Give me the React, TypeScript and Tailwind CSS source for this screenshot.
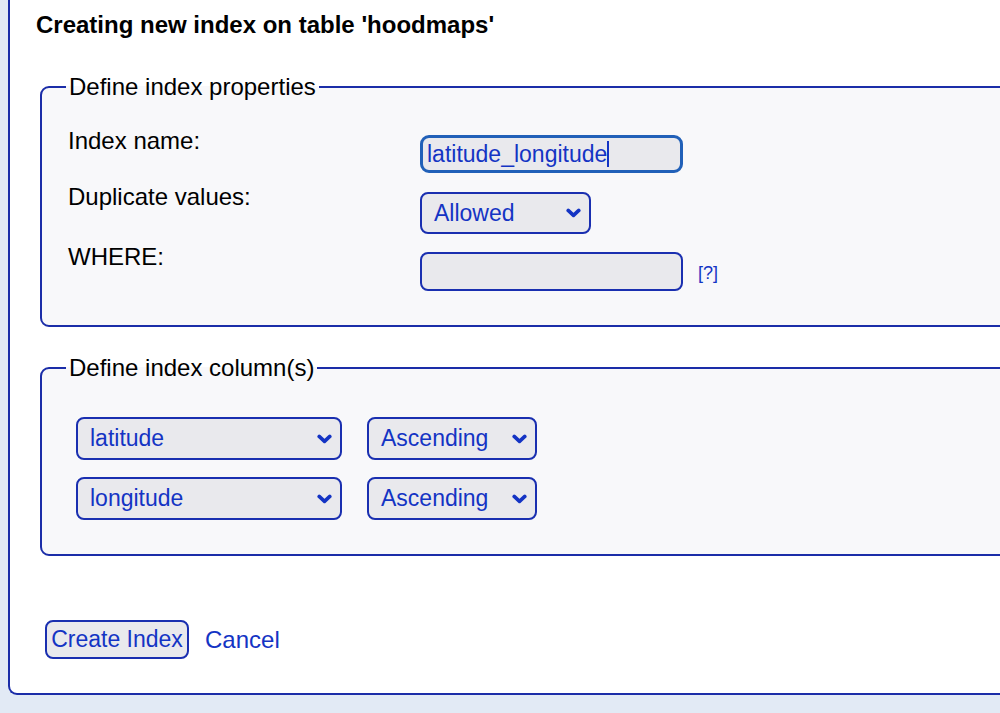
import React from 'react';

const font = { fontFamily: '"Liberation Sans", Arial, Helvetica, sans-serif' };

const Chevron = () => (
  <svg width="15" height="10" viewBox="0 0 15 10" className="shrink-0">
    <path d="M2.2 2.4 L7.5 7.4 L12.8 2.4" fill="none" stroke="#1434c4" strokeWidth="3.6" strokeLinecap="round" strokeLinejoin="round" />
  </svg>
);

const Select = ({ value, w, h }: { value: string; w: string; h: string }) => (
  <div className={`${w} ${h} flex items-center justify-between pl-[12px] pr-[8px] border-2 border-[#1a2fb0] rounded-[8px] bg-[#e9e9ed] text-[23px] text-[#1434c4]`}>
    <span>{value}</span>
    <Chevron />
  </div>
);

export default function App() {
  return (
    <div className="w-full h-[713px] overflow-hidden bg-[#e2eaf5]" style={font}>
      <div className="ml-2 w-[1100px] bg-white border-l-2 border-b-2 border-[#1b2da8] rounded-bl-[9px] pb-[34px]">
        <h1 className="pt-[11px] pl-[26px] text-[24px] leading-[28px] font-bold text-black">
          Creating new index on table 'hoodmaps'
        </h1>

        {/* properties */}
        <fieldset className="mt-[34px] ml-[30px] w-[1040px] border-2 border-[#1b2da8] rounded-[9px] bg-[#f8f8fa] pl-[24px] pt-[34px] pb-[34px]">
          <legend className="px-[3px] text-[24px] leading-[28px] text-black">Define index properties</legend>
          <div className="flex flex-col gap-[19px]">
            <div className="flex items-start">
              <div className="w-[352px] ml-[2px] -mt-[8px] text-[24px] leading-[28px] text-black">Index name:</div>
              <div className="w-[263px] h-[38px] flex items-center pl-[4px] border-[3px] border-[#2160b8] rounded-[9px] bg-[#e9e9ed] text-[23px] text-[#1434c4]">
                <span>latitude_longitude</span>
                <span className="w-[1.5px] h-[26px] bg-[#1434c4]" />
              </div>
            </div>
            <div className="flex items-start">
              <div className="w-[352px] ml-[2px] -mt-[9px] text-[24px] leading-[28px] text-black">Duplicate values:</div>
              <Select value="Allowed" w="w-[171px]" h="h-[42px]" />
            </div>
            <div className="flex items-start -mt-[1px]">
              <div className="w-[352px] ml-[2px] -mt-[9px] text-[24px] leading-[28px] text-black">WHERE:</div>
              <div className="w-[263px] h-[39px] border-2 border-[#1a2fb0] rounded-[8px] bg-[#e9e9ed]" />
              <a className="ml-[15px] mt-[10px] text-[18px] leading-[22px] text-[#1434c4]">[?]</a>
            </div>
          </div>
        </fieldset>

        {/* columns */}
        <fieldset className="mt-[27px] ml-[30px] w-[1040px] border-2 border-[#1b2da8] rounded-[9px] bg-[#f8f8fa] pl-[24px] pt-[35px] pb-[34px]">
          <legend className="px-[3px] text-[24px] leading-[28px] text-black">Define index column(s)</legend>
          <div className="ml-[10px] flex flex-col gap-[17px]">
            <div className="flex gap-[25px]">
              <Select value="latitude" w="w-[266px]" h="h-[43px]" />
              <Select value="Ascending" w="w-[170px]" h="h-[43px]" />
            </div>
            <div className="flex gap-[25px]">
              <Select value="longitude" w="w-[266px]" h="h-[43px]" />
              <Select value="Ascending" w="w-[170px]" h="h-[43px]" />
            </div>
          </div>
        </fieldset>

        <div className="mt-[64px] ml-[35px] flex items-center gap-[16px]">
          <button className="w-[144px] h-[39px] border-2 border-[#1a2fb0] rounded-[8px] bg-[#e9e9ed] text-[23px] text-[#1434c4]">
            Create Index
          </button>
          <a className="text-[24px] leading-[28px] text-[#1434c4]">Cancel</a>
        </div>
      </div>
    </div>
  );
}
